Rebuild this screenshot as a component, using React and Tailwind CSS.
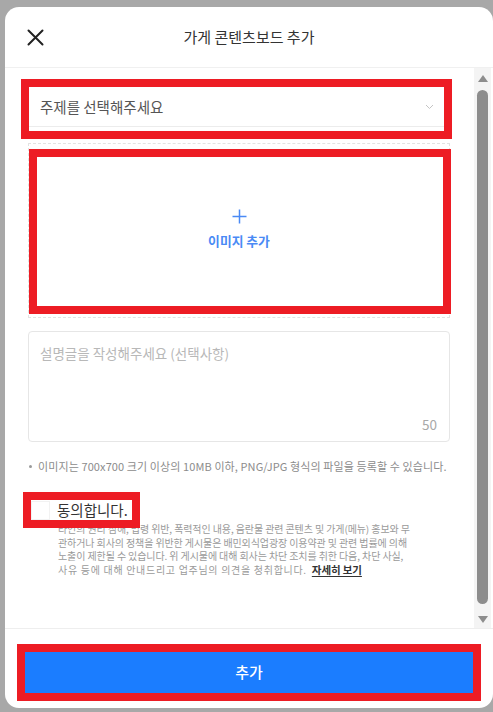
import React from 'react';

const font = { fontFamily: '"Noto Sans CJK KR", "Noto Sans", sans-serif' };

const CloseIcon = () => (
  <svg width="17" height="17" viewBox="0 0 17 17" fill="none">
    <path d="M1.5 1.5 L15.5 15.5 M15.5 1.5 L1.5 15.5" stroke="#222" strokeWidth="2" strokeLinecap="round" />
  </svg>
);

const Scrollbar = () => (
  <div className="w-[17px] bg-[#f4f4f4] flex flex-col items-center pt-[7px] pb-[5px]">
    <svg width="10" height="7" viewBox="0 0 10 7"><path d="M5 0 L10 7 L0 7 Z" fill="#8d8d8d" /></svg>
    <div className="w-[11px] flex-1 mt-[8px] mb-[12px] rounded-full bg-[#8d8d8d]" />
    <svg width="10" height="7" viewBox="0 0 10 7"><path d="M0 0 L10 0 L5 7 Z" fill="#8d8d8d" /></svg>
  </div>
);

const App = () => {
  return (
    <div className="w-[493px] h-[712px] bg-[#a8a8a8] overflow-hidden pt-[7px] pl-[5px]" style={font}>
      <div className="w-[488px] h-[701px] bg-white rounded-[14px] flex flex-col overflow-hidden">
        {/* header */}
        <div className="h-[61px] shrink-0 border-b border-[#f0f0f0] flex items-center pl-[22px] pr-[22px]">
          <div className="w-[17px] h-[17px]"><CloseIcon /></div>
          <div className="flex-1 text-center text-[15px] text-[#333]">가게 콘텐츠보드 추가</div>
          <div className="w-[17px]" />
        </div>

        {/* body */}
        <div className="flex-1 flex min-h-0">
          <div className="flex-1 pl-[23px] pt-[19px]">
            <div className="ml-[1px] w-[415px] h-[44px] outline-8 outline-[#ed1c24]">
              <div className="h-[40px] border-b border-[#ececec] flex items-center justify-between pl-[11px] pr-[10px]">
                <span className="text-[14.5px] text-[#555]">주제를 선택해주세요</span>
                <svg width="9" height="6" viewBox="0 0 9 6" fill="none"><path d="M1 1 L4.5 4.5 L8 1" stroke="#c4c4c4" strokeWidth="1" /></svg>
              </div>
            </div>

            <div className="relative mt-[12px] w-[422px] h-[175px] border border-dashed border-[#e2e2e2] flex flex-col items-center justify-center">
              <div className="absolute left-0 top-[5px] right-[-2px] bottom-[3px] border-8 border-[#ed1c24]" />
              <div className="flex flex-col items-center gap-[9px] mt-[-4px]">
                <svg width="15" height="15" viewBox="0 0 15 15" fill="none"><path d="M7.5 0.5 V14.5 M0.5 7.5 H14.5" stroke="#4a8af5" strokeWidth="1.5" /></svg>
                <span className="text-[12.8px] leading-[16px] font-bold text-[#4a8af5]">이미지 추가</span>
              </div>
            </div>

            <div className="mt-[13px] w-[422px] h-[111px] border border-[#e6e6e6] rounded-[4px] flex flex-col justify-between pl-[11px] pr-[12px] pt-[11px] pb-[8px]">
              <span className="text-[13.5px] leading-[20px] text-[#b8b8b8]">설명글을 작성해주세요 (선택사항)</span>
              <span className="self-end text-[13.5px] leading-[18px] text-[#a8a8a8]">50</span>
            </div>

            <div className="mt-[17px] flex items-center text-[11px] leading-[14px] text-[#8c8c8c]">
              <span className="w-[3px] h-[3px] rounded-full bg-[#9a9a9a] ml-[1px] mr-[6px]" />
              <span className="tracking-[0.1px]">이미지는 700x700 크기 이상의 10MB 이하, PNG/JPG 형식의 파일을 등록할 수 있습니다.</span>
            </div>

            <div className="mt-[27px] ml-[3px] w-[101px] h-[20px] outline-8 outline-[#ed1c24] flex items-center">
              <div className="w-[19px] h-[19px] border border-[#f2f2f2] bg-white" />
              <span className="ml-[7px] text-[14.5px] leading-[20px] text-[#333]">동의합니다.</span>
            </div>

            <p className="mt-[2px] ml-[30px] w-[395px] text-[10px] leading-[13.7px] text-[#9a9a9a] whitespace-nowrap tracking-[-0.1px]">
              타인의 권리 침해, 법령 위반, 폭력적인 내용, 음란물 관련 콘텐츠 및 가게(메뉴) 홍보와 무<br />
              관하거나 회사의 정책을 위반한 게시물은 배민외식업광장 이용약관 및 관련 법률에 의해<br />
              노출이 제한될 수 있습니다. 위 게시물에 대해 회사는 차단 조치를 취한 다음, 차단 사실,<br />
              <span className="tracking-[0.7px]">사유 등에 대해 안내드리고 업주님의 의견을 청취합니다.</span>
              <span className="ml-[5px] text-[10.5px] font-bold text-[#333] underline underline-offset-2">자세히 보기</span>
            </p>
          </div>
          <Scrollbar />
          <div className="w-[2px]" />
        </div>

        {/* footer */}
        <div className="h-[80px] shrink-0 border-t border-[#eeeeee] px-[20px] pt-[23px]">
          <button className="w-full h-[41px] bg-[#1b7dff] text-white text-[15px] font-medium outline-8 outline-[#ed1c24]">
            추가
          </button>
        </div>
      </div>
    </div>
  );
};

export default App;
